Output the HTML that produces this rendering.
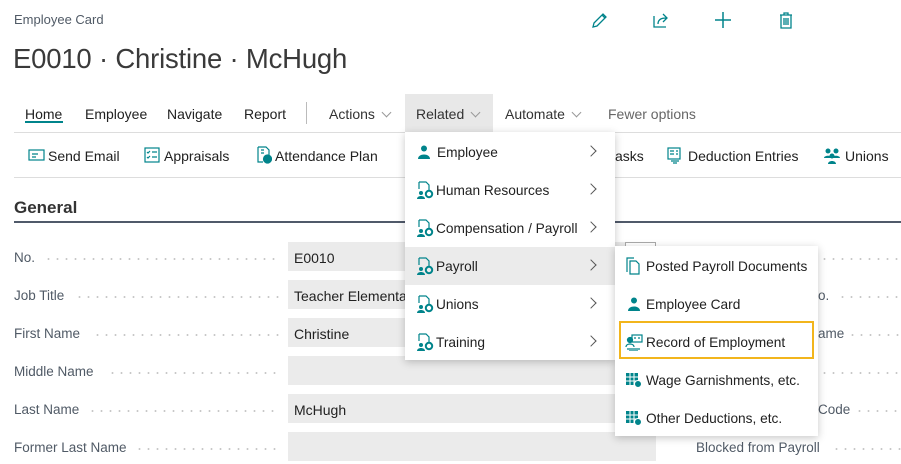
<!DOCTYPE html>
<html><head><meta charset="utf-8"><style>
*{margin:0;padding:0;box-sizing:border-box}
body{width:901px;height:464px;overflow:hidden;background:#fff;font-family:"Liberation Sans",sans-serif;color:#212121;position:relative;font-size:14px}
.a{position:absolute;white-space:nowrap}
.lbl{color:#505a66;font-size:13.5px}
.dots{position:absolute;height:2px;background-image:radial-gradient(circle,#c8c8c8 0.9px,transparent 1.1px);background-size:9px 2px}
.box{position:absolute;left:288px;width:368px;height:29px;background:#ebebeb}
.menu{position:absolute;background:#fff;box-shadow:0 2px 8px rgba(0,0,0,.22)}
.mi{position:absolute;left:0;height:38px;display:flex;align-items:center;font-size:13.7px;color:#212121}
.chev{position:absolute;right:20px;top:14px;width:8px;height:8px;border-right:1px solid #555;border-top:1px solid #555;transform:rotate(45deg)}
.dd{display:inline-block;width:7px;height:7px;border-right:1px solid #999;border-bottom:1px solid #999;transform:rotate(45deg);margin-left:8px;position:relative;top:-3px}
</style></head><body>
<div class="a" style="left:14px;top:12px;font-size:13px;color:#505a66">Employee Card</div>
<div class="a" style="left:13px;top:43px;font-size:27.5px;color:#3a3a3a;letter-spacing:-0.2px">E0010 · Christine · McHugh</div>

<svg class="a" style="left:590px;top:10px" width="20" height="20" viewBox="0 0 20 20" fill="none" stroke="#00848b" stroke-width="1.3"><path d="M3 17l1-4L13 4l3 3-9 9z M12 5l3 3"/></svg>
<svg class="a" style="left:651px;top:10px" width="20" height="20" viewBox="0 0 20 20" fill="none" stroke="#00848b" stroke-width="1.3"><path d="M3 6v11h12 M7 14c0-4 3-6 8-6 M12 4l4 4-4 4"/></svg>
<svg class="a" style="left:713px;top:10px" width="20" height="20" viewBox="0 0 20 20" fill="none" stroke="#00848b" stroke-width="1.5"><path d="M10 2v16 M2 10h16"/></svg>
<svg class="a" style="left:776px;top:10px" width="20" height="20" viewBox="0 0 20 20" fill="none" stroke="#00848b" stroke-width="1.3"><path d="M4 5h12 M8 5V3h4v2 M5 5v13h10V5 M8 8v7 M10 8v7 M12 8v7"/></svg>

<div class="a" style="left:405px;top:94px;width:88px;height:38px;background:#e8e8e8"></div>
<div class="a" style="left:25px;top:106px">Home</div>
<div class="a" style="left:25px;top:121px;width:38px;height:2px;background:#00848b"></div>
<div class="a" style="left:85px;top:106px">Employee</div>
<div class="a" style="left:167px;top:106px">Navigate</div>
<div class="a" style="left:244px;top:106px">Report</div>
<div class="a" style="left:306px;top:102px;width:1px;height:22px;background:#bbb"></div>
<div class="a" style="left:329px;top:106px;color:#333">Actions<i class="dd"></i></div>
<div class="a" style="left:416px;top:106px;color:#333">Related<i class="dd"></i></div>
<div class="a" style="left:505px;top:106px;color:#333">Automate<i class="dd"></i></div>
<div class="a" style="left:608px;top:106px;color:#666">Fewer options</div>
<div class="a" style="left:14px;top:132px;width:887px;height:1px;background:#ddd"></div>

<svg class="a" style="left:28px;top:148px" width="17" height="14" viewBox="0 0 17 14" fill="none" stroke="#00848b" stroke-width="1.2"><rect x="1" y="2" width="15" height="10"/><path d="M4 6h6 M4 9h4"/></svg>
<div class="a" style="left:48px;top:148px">Send Email</div>
<svg class="a" style="left:144px;top:147px" width="16" height="16" viewBox="0 0 16 16" fill="none" stroke="#00848b" stroke-width="1.2"><rect x="1" y="1" width="14" height="14"/><path d="M3 5l1 1 2-2 M8 5h5 M3 10l1 1 2-2 M8 10h5"/></svg>
<div class="a" style="left:164px;top:148px">Appraisals</div>
<svg class="a" style="left:256px;top:146px" width="16" height="18" viewBox="0 0 16 18" fill="none" stroke="#00848b" stroke-width="1.2"><path d="M2 1h8l3 3v5 M2 1v15h5 M5 4h3 M5 7h3"/><circle cx="11.5" cy="13" r="4" fill="#00848b"/></svg>
<div class="a" style="left:275px;top:148px">Attendance Plan</div>
<div class="a" style="left:615px;top:148px">asks</div>
<svg class="a" style="left:667px;top:147px" width="17" height="17" viewBox="0 0 17 17" fill="none" stroke="#00848b" stroke-width="1.2"><rect x="1" y="1" width="12" height="11"/><path d="M3 4h4 M3 7h4 M9 4h2 M9 7h2 M4 14h8 M6 16h4"/></svg>
<div class="a" style="left:688px;top:148px">Deduction Entries</div>
<svg class="a" style="left:823px;top:147px" width="18" height="17" viewBox="0 0 18 17" fill="#00848b"><circle cx="5" cy="4" r="2.5"/><circle cx="13" cy="4" r="2.5"/><circle cx="9" cy="9" r="2.5"/><path d="M1 11c0-3 8-3 8 0z M9 11c0-3 8-3 8 0z M5 17c0-4 8-4 8 0z"/></svg>
<div class="a" style="left:845px;top:148px">Unions</div>
<div class="a" style="left:14px;top:177px;width:887px;height:1px;background:#ddd"></div>

<div class="a" style="left:14px;top:198px;font-size:17px;font-weight:bold;color:#333">General</div>
<div class="a" style="left:14px;top:221px;width:887px;height:2px;background:#505a6a"></div>

<div class="box" style="top:242px"></div>
<div class="box" style="top:280px"></div>
<div class="box" style="top:318px"></div>
<div class="box" style="top:356px"></div>
<div class="box" style="top:394px"></div>
<div class="box" style="top:432px"></div>
<div class="a" style="left:625px;top:242px;width:31px;height:20px;border:1px solid #aaa;border-bottom:none;background:#fff"></div>
<div class="a lbl" style="left:14px;top:250px">No.</div><div class="dots" style="left:44px;top:258px;width:236px"></div>
<div class="a lbl" style="left:14px;top:288px">Job Title</div><div class="dots" style="left:75px;top:296px;width:205px"></div>
<div class="a lbl" style="left:14px;top:326px">First Name</div><div class="dots" style="left:93px;top:334px;width:187px"></div>
<div class="a lbl" style="left:14px;top:364px">Middle Name</div><div class="dots" style="left:108px;top:372px;width:172px"></div>
<div class="a lbl" style="left:14px;top:402px">Last Name</div><div class="dots" style="left:88px;top:410px;width:192px"></div>
<div class="a lbl" style="left:14px;top:440px">Former Last Name</div><div class="dots" style="left:135px;top:448px;width:145px"></div>
<div class="a" style="left:294px;top:250px">E0010</div>
<div class="a" style="left:294px;top:288px">Teacher Elementary</div>
<div class="a" style="left:294px;top:326px">Christine</div>
<div class="a" style="left:294px;top:402px">McHugh</div>

<div class="dots" style="left:820px;top:258px;width:81px"></div>
<div class="a lbl" style="left:818px;top:288px">o.</div><div class="dots" style="left:838px;top:296px;width:63px"></div>
<div class="a lbl" style="left:818px;top:326px">ame</div><div class="dots" style="left:848px;top:334px;width:53px"></div>
<div class="dots" style="left:820px;top:372px;width:81px"></div>
<div class="a lbl" style="left:818px;top:402px">Code</div><div class="dots" style="left:855px;top:410px;width:46px"></div>
<div class="a lbl" style="left:696px;top:440px">Blocked from Payroll</div><div class="dots" style="left:832px;top:448px;width:69px"></div>

<div class="menu" style="left:405px;top:132px;width:210px;height:228px">
 <div class="mi" style="top:1px;width:210px"><svg style="margin-left:13px" width="12" height="14" viewBox="0 0 12 14" fill="#00848b"><circle cx="6" cy="3.5" r="3"/><path d="M0 14c0-6 12-6 12 0z"/></svg><span style="margin-left:7px">Employee</span><i class="chev"></i></div>
 <div class="mi" style="top:39px;width:210px"><svg style="margin-left:11px" width="18" height="18" viewBox="0 0 18 18"><path d="M3 1h7l3 3v5 M3 1v7" stroke="#00848b" fill="none" stroke-width="1.2"/><circle cx="5" cy="12" r="2" fill="#00848b"/><path d="M1 18c0-4 8-4 8 0z" fill="#00848b"/><circle cx="13" cy="13" r="3.2" fill="none" stroke="#00848b" stroke-width="2"/></svg><span style="margin-left:2px">Human Resources</span><i class="chev"></i></div>
 <div class="mi" style="top:77px;width:210px"><svg style="margin-left:11px" width="18" height="18" viewBox="0 0 18 18"><path d="M3 1h7l3 3v5 M3 1v7" stroke="#00848b" fill="none" stroke-width="1.2"/><circle cx="5" cy="12" r="2" fill="#00848b"/><path d="M1 18c0-4 8-4 8 0z" fill="#00848b"/><circle cx="13" cy="13" r="3.2" fill="none" stroke="#00848b" stroke-width="2"/></svg><span style="margin-left:2px">Compensation / Payroll</span><i class="chev"></i></div>
 <div class="mi" style="top:115px;width:210px;background:#ebebeb"><svg style="margin-left:11px" width="18" height="18" viewBox="0 0 18 18"><path d="M3 1h7l3 3v5 M3 1v7" stroke="#00848b" fill="none" stroke-width="1.2"/><circle cx="5" cy="12" r="2" fill="#00848b"/><path d="M1 18c0-4 8-4 8 0z" fill="#00848b"/><circle cx="13" cy="13" r="3.2" fill="none" stroke="#00848b" stroke-width="2"/></svg><span style="margin-left:2px">Payroll</span><i class="chev"></i></div>
 <div class="mi" style="top:153px;width:210px"><svg style="margin-left:11px" width="18" height="18" viewBox="0 0 18 18"><path d="M3 1h7l3 3v5 M3 1v7" stroke="#00848b" fill="none" stroke-width="1.2"/><circle cx="5" cy="12" r="2" fill="#00848b"/><path d="M1 18c0-4 8-4 8 0z" fill="#00848b"/><circle cx="13" cy="13" r="3.2" fill="none" stroke="#00848b" stroke-width="2"/></svg><span style="margin-left:2px">Unions</span><i class="chev"></i></div>
 <div class="mi" style="top:191px;width:210px"><svg style="margin-left:11px" width="18" height="18" viewBox="0 0 18 18"><path d="M3 1h7l3 3v5 M3 1v7" stroke="#00848b" fill="none" stroke-width="1.2"/><circle cx="5" cy="12" r="2" fill="#00848b"/><path d="M1 18c0-4 8-4 8 0z" fill="#00848b"/><circle cx="13" cy="13" r="3.2" fill="none" stroke="#00848b" stroke-width="2"/></svg><span style="margin-left:2px">Training</span><i class="chev"></i></div>
</div>

<div class="menu" style="left:615px;top:246px;width:203px;height:190px">
 <div class="mi" style="top:1px"><svg style="margin-left:11px" width="14" height="18" viewBox="0 0 14 18" fill="none" stroke="#00848b" stroke-width="1.2"><path d="M1 15V1h7 M4 17V4h6l3 3v10z"/></svg><span style="margin-left:6px">Posted Payroll Documents</span></div>
 <div class="mi" style="top:39px"><svg style="margin-left:13px" width="12" height="14" viewBox="0 0 12 14" fill="#00848b"><circle cx="6" cy="3.5" r="3"/><path d="M0 14c0-6 12-6 12 0z"/></svg><span style="margin-left:6px">Employee Card</span></div>
 <div class="a" style="left:4px;top:75px;width:195px;height:38px;border:2px solid #f2b51c"></div>
 <div class="mi" style="top:77px"><svg style="margin-left:10px" width="18" height="17" viewBox="0 0 18 17" fill="none" stroke="#00848b" stroke-width="1.2"><rect x="7" y="1" width="10" height="7"/><path d="M9 4h2 M13 4h2"/><circle cx="5" cy="6" r="2.5" fill="#00848b"/><path d="M1 13c0-4 8-4 8 0 M2 15h13 M4 17h9"/></svg><span style="margin-left:3px">Record of Employment</span></div>
 <div class="mi" style="top:115px"><svg style="margin-left:10px" width="18" height="18" viewBox="0 0 18 18"><rect x="1" y="2" width="12" height="12" fill="#00848b"/><path d="M1 6h12 M1 10h12 M5 2v12 M9 2v12" stroke="#fff" stroke-width="1"/><circle cx="13" cy="13" r="3.5" fill="#00848b" stroke="#fff"/></svg><span style="margin-left:3px">Wage Garnishments, etc.</span></div>
 <div class="mi" style="top:153px"><svg style="margin-left:10px" width="18" height="18" viewBox="0 0 18 18"><rect x="1" y="2" width="12" height="12" fill="#00848b"/><path d="M1 6h12 M1 10h12 M5 2v12 M9 2v12" stroke="#fff" stroke-width="1"/><circle cx="13" cy="13" r="3.5" fill="#00848b" stroke="#fff"/></svg><span style="margin-left:3px">Other Deductions, etc.</span></div>
</div>
</body></html>
